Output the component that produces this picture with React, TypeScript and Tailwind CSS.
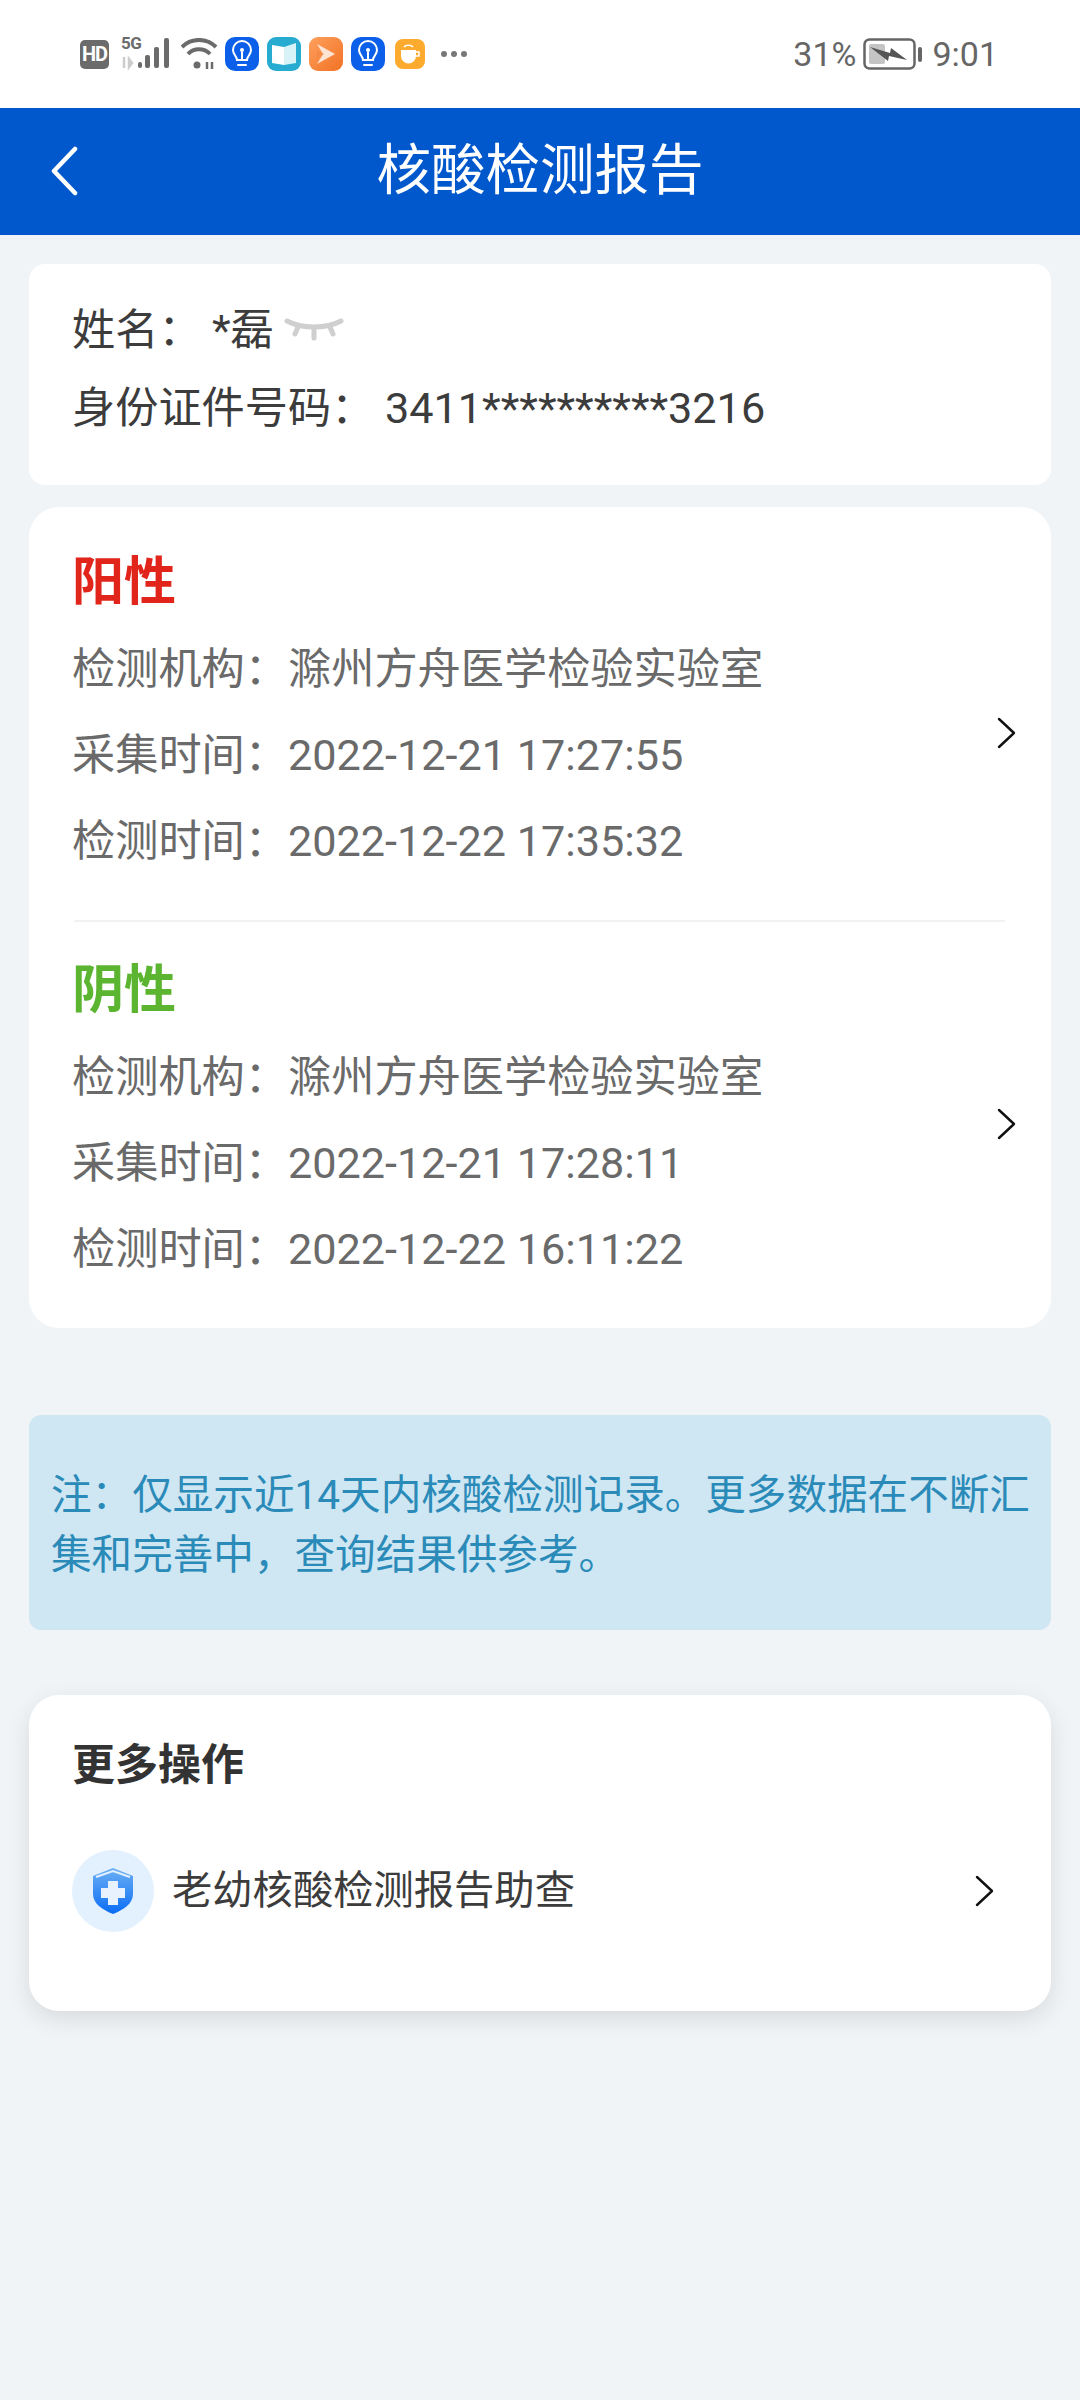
const font = { fontFamily: '"Roboto", "Noto Sans CJK SC", sans-serif' }

const reports = [
  {
    result: '阳性',
    color: 'text-[#e1251b]',
    arrow: 'mt-[36px]',
    collected: '2022-12-21 17:27:55',
    tested: '2022-12-22 17:35:32',
  },
  {
    result: '阴性',
    color: 'text-[#5cb531]',
    arrow: 'mt-[2px]',
    collected: '2022-12-21 17:28:11',
    tested: '2022-12-22 16:11:22',
  },
]

function Chevron({ className }: { className?: string }) {
  return (
    <svg className={className} width="20" height="32" viewBox="0 0 20 32" fill="none" stroke="#111" strokeWidth="2.4" strokeLinecap="round" strokeLinejoin="round">
      <path d="M2 2 L17 16 L2 30" />
    </svg>
  )
}

function Bulb() {
  return (
    <div className="w-[34px] h-[34px] rounded-[10px] bg-[#0b5fe8] flex items-center justify-center">
      <svg width="24" height="28" viewBox="0 0 24 28" fill="none" stroke="#fff" strokeWidth="2">
        <path d="M7 20 C7 16 3 15 3 10 A9 9 0 0 1 21 10 C21 15 17 16 17 20 Z" fill="#0b5fe8" />
        <path d="M8 25h8" strokeLinecap="round" />
        <path d="M12 20v-8" />
        <circle cx="12" cy="10" r="2" fill="#fff" stroke="none" />
      </svg>
    </div>
  )
}

function StatusBar() {
  return (
    <div className="h-[108px] bg-white flex items-center justify-between pl-[80px] pr-[82px]">
      <div className="flex items-center">
        <div className="w-[29px] h-[29px] rounded-[5px] bg-[#6b6b6b] text-white text-[20px] font-bold leading-[29px] text-center tracking-[-1px]">
          HD
        </div>
        <div className="relative w-[60px] h-[34px] ml-[12px]">
          <span className="absolute left-0 top-[-3px] text-[17px] font-bold leading-[18px] tracking-[-0.5px] text-[#6b6b6b]">5G</span>
          <svg className="absolute left-0 top-0" width="60" height="34" viewBox="0 0 60 34">
            <path d="M3 20v11M8 22l3 4-3 4z" stroke="#ccc" strokeWidth="2.5" fill="#ccc" />
            <rect x="17" y="25" width="4" height="6" rx="2" fill="#6b6b6b" />
            <rect x="24" y="18" width="5" height="13" rx="2" fill="#6b6b6b" />
            <rect x="33" y="10" width="5" height="21" rx="2" fill="#6b6b6b" />
            <rect x="43" y="1" width="5" height="30" rx="2" fill="#6b6b6b" />
          </svg>
        </div>
        <svg className="mr-[7px]" width="37" height="32" viewBox="0 0 37 32" fill="none" stroke="#6b6b6b" strokeWidth="4">
          <path d="M1 9 A24 24 0 0 1 35 9" />
          <path d="M7 16 A15 15 0 0 1 29 16" />
          <circle cx="16" cy="27" r="3.5" fill="#6b6b6b" stroke="none" />
          <path d="M26 24v7M31 24v7" strokeWidth="2.5" />
        </svg>
        <div className="flex items-center gap-[8px]">
          <Bulb />
          <div className="w-[34px] h-[34px] rounded-[9px] bg-[#27abd0] flex items-center justify-center">
            <svg width="26" height="24" viewBox="0 0 26 24">
              <path d="M1 3 L13 5 V23 L1 21 Z" fill="#fff" />
              <path d="M13 5 L25 1 V21 L13 23 Z" fill="#d8f3f8" />
            </svg>
          </div>
          <div className="w-[34px] h-[34px] rounded-[9px] bg-gradient-to-br from-[#ffa05c] to-[#f0711f] flex items-center justify-center">
            <svg width="22" height="24" viewBox="0 0 22 24">
              <path d="M2 2 L20 12 L2 22 L8 12 Z" fill="#fde3d2" />
              <path d="M2 9 L9 12 L2 16 Z" fill="#f58a45" />
            </svg>
          </div>
          <Bulb />
          <div className="ml-[2px] w-[30px] h-[30px] rounded-[8px] bg-[#fdab2e] flex items-center justify-center">
            <svg width="22" height="22" viewBox="0 0 22 22">
              <path d="M2 7 H17 V13 A7.5 7.5 0 0 1 2 13 Z" fill="#fff" />
              <path d="M17 9 H20 V13 H16" fill="none" stroke="#fff" strokeWidth="1.5" />
              <path d="M5 4 A5 3 0 0 1 14 4" fill="none" stroke="#fff" strokeWidth="1.5" />
            </svg>
          </div>
        </div>
        <div className="ml-[16px] flex gap-[4px]">
          <div className="w-[6px] h-[6px] rounded-full bg-[#777]" />
          <div className="w-[6px] h-[6px] rounded-full bg-[#777]" />
          <div className="w-[6px] h-[6px] rounded-full bg-[#777]" />
        </div>
      </div>
      <div className="flex items-center text-[34px] text-[#666]">
        <span>31%</span>
        <svg className="ml-[7px] mr-[9px]" width="60" height="32" viewBox="0 0 60 32">
          <rect x="1.5" y="1.5" width="50" height="29" rx="5" fill="#fff" stroke="#666" strokeWidth="2.5" />
          <rect x="6" y="6" width="16" height="20" rx="2" fill="#c4c4c4" />
          <path d="M7 9 L27 15 L28 10 L44 22 L26 18 L25 23 Z" fill="#555" />
          <rect x="55" y="9" width="4" height="15" rx="2" fill="#666" />
        </svg>
        <span>9:01</span>
      </div>
    </div>
  )
}

function Field({ label, value }: { label: string; value: string }) {
  return (
    <div className="h-[86px] flex items-center text-[43.2px] text-[#6a6a6a]">
      <span className="w-[216px]">{label}：</span>
      <span>{value}</span>
    </div>
  )
}

export default function App() {
  return (
    <div className="w-[1080px] h-[2400px] bg-[#f0f4f7]" style={font}>
      <StatusBar />

      <div className="relative h-[127px] bg-[#0058cc] flex items-center justify-center">
        <svg className="absolute left-[50px] top-[38px]" width="28" height="50" viewBox="0 0 28 50" fill="none" stroke="#fff" strokeWidth="4.5" strokeLinecap="round" strokeLinejoin="round">
          <path d="M25 3 L4 25 L25 47" />
        </svg>
        <h1 className="text-[54.5px] text-white leading-none -mt-[2px]">核酸检测报告</h1>
      </div>

      <div className="px-[29px] pt-[29px]">
        <div className="rounded-[16px] bg-white pt-[29px] pb-[36px] pl-[43px]">
          <div className="h-[76px] flex items-center text-[43.2px] text-[#3c3c3c]">
            <span className="w-[140px]">姓名：</span>
            <span>*磊</span>
            <svg className="ml-[10px] -mt-[4px]" width="60" height="24" viewBox="0 0 60 24" fill="none" stroke="#cfcfcf" strokeWidth="5" strokeLinecap="round">
              <path d="M3 4 C18 12 42 12 57 4" />
              <path d="M14 10 L11 17 M30 11 V21 M46 10 L49 17" />
            </svg>
          </div>
          <div className="h-[80px] flex items-center text-[43.2px] text-[#3c3c3c]">
            <span className="w-[313px]">身份证件号码：</span>
            <span>3411**********3216</span>
          </div>
        </div>

        <div className="mt-[22px] rounded-[30px] bg-white pl-[43px] pr-[44px] pt-[38px] pb-[35px]">
          {reports.map((r, i) => (
            <div key={r.result}>
              {i > 0 && <div className="h-[2px] bg-[#f0f2f4] mt-[35px] mb-[31px] ml-[2px] mr-[2px]" />}
              <div className="flex items-center">
                <div className="flex-1">
                  <div className={`h-[76px] flex items-center text-[52px] font-bold ${r.color}`}>{r.result}</div>
                  <div className="mt-[6px]">
                    <Field label="检测机构" value="滁州方舟医学检验实验室" />
                    <Field label="采集时间" value={r.collected} />
                    <Field label="检测时间" value={r.tested} />
                  </div>
                </div>
                <Chevron className={`-mr-[10px] ${r.arrow}`} />
              </div>
            </div>
          ))}
        </div>

        <div className="mt-[87px] rounded-[12px] bg-[#cfe6f3] pl-[22px] pr-[8px] pt-[50px] pb-[45px] text-[40.6px] leading-[60px] text-[#2a8ab8]">
          注：仅显示近14天内核酸检测记录。更多数据在不断汇集和完善中，查询结果供参考。
        </div>

        <div className="mt-[65px] rounded-[30px] bg-white shadow-[0_8px_24px_rgba(0,0,0,0.1)] pl-[43px] pr-[56px] pt-[42px] h-[316px]">
          <div className="h-[56px] flex items-center text-[43px] font-bold text-[#333]">更多操作</div>
          <div className="mt-[57px] flex items-center">
            <div className="w-[82px] h-[82px] rounded-full bg-[#e3f0fd] flex items-center justify-center">
              <svg width="40" height="46" viewBox="0 0 40 46">
                <defs>
                  <linearGradient id="shield" x1="0" y1="0" x2="0" y2="1">
                    <stop offset="0" stopColor="#6cb0f5" />
                    <stop offset="1" stopColor="#0a6cf5" />
                  </linearGradient>
                </defs>
                <path d="M20 0 L40 8 V26 C40 36 30 42 20 46 C10 42 0 36 0 26 V8 Z" fill="url(#shield)" />
                <path d="M3 9 L20 3 L37 9" fill="none" stroke="#e3f0fd" strokeWidth="2" />
                <path d="M15 13 H25 V20 H32 V30 H25 V37 H15 V30 H8 V20 H15 Z" fill="#e8f2fe" />
              </svg>
            </div>
            <span className="ml-[18px] flex-1 text-[40.3px] text-[#3c3c3c]">老幼核酸检测报告助查</span>
            <Chevron />
          </div>
        </div>
      </div>
    </div>
  )
}
